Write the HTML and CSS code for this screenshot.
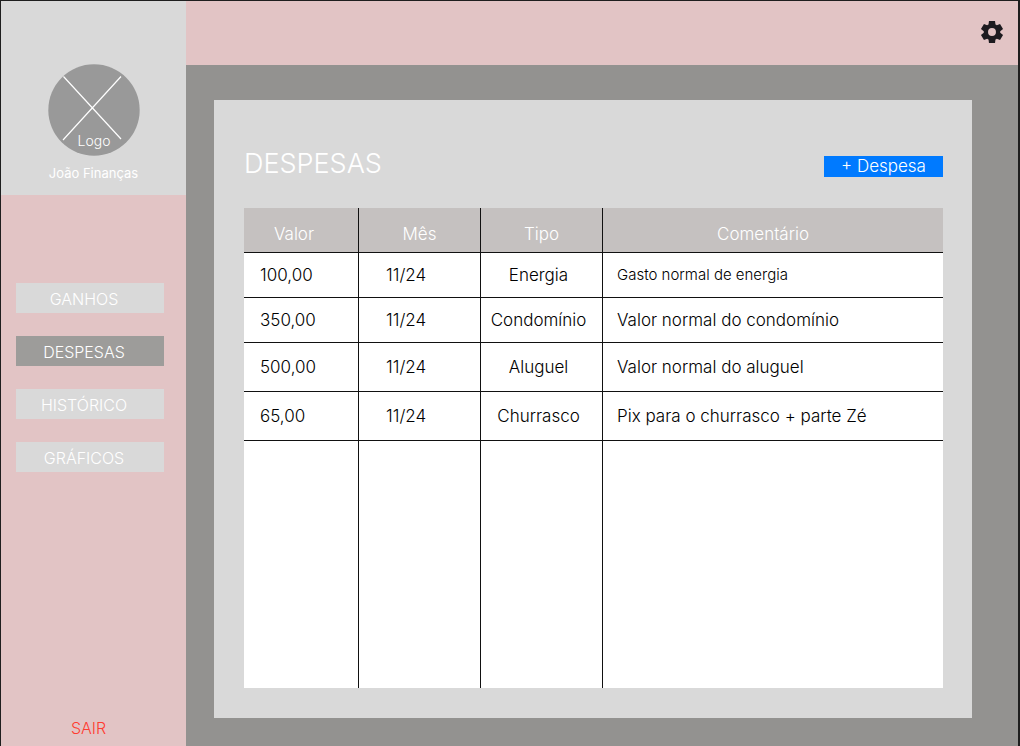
FILE: index.html
```html
<!DOCTYPE html>
<html lang="pt-BR">
<head>
<meta charset="utf-8">
<meta name="viewport" content="width=device-width, initial-scale=1">
<title>João Finanças - Despesas</title>
<link rel="stylesheet" href="styles.css">
</head>
<body>
<div class="app">
  <aside class="sidebar">
    <div class="brand">
      <svg class="logo" viewBox="0 0 92 92" role="img" aria-label="Logo">
        <circle cx="46" cy="46" r="45.7" fill="#999"/>
        <path d="M15.5 12.5 73 75M73 12.5 15 76" stroke="#fff" stroke-width="1.2" fill="none"/>
        <text class="logo-text" x="46" y="82" text-anchor="middle">Logo</text>
      </svg>
      <span class="brand-name">João Finanças</span>
    </div>
    <nav class="nav">
      <a class="nav-link" href="#ganhos">GANHOS</a>
      <a class="nav-link active" href="#despesas" aria-current="page">DESPESAS</a>
      <a class="nav-link" href="#historico">HISTÓRICO</a>
      <a class="nav-link" href="#graficos">GRÁFICOS</a>
    </nav>
    <a class="logout" href="#sair">SAIR</a>
  </aside>
  <div class="content">
    <header class="topbar">
      <button class="settings" type="button" aria-label="Configurações">
        <svg class="gear" viewBox="2 2 20 20" aria-hidden="true"><path fill="#1d1b20" fill-rule="evenodd" d="M9.25 2h5.5l.4 3.2q.65.25 1.2.67l2.95-1.25 2.75 4.75-2.57 1.95v1.36l2.57 1.95-2.75 4.75-2.95-1.25q-.55.42-1.2.67l-.4 3.2h-5.5l-.4-3.2q-.65-.25-1.2-.67L4.7 19.38l-2.75-4.75 2.57-1.95v-1.36L1.95 9.37 4.7 4.62l2.95 1.25q.55-.42 1.2-.67zM12 8.4a3.6 3.6 0 1 0 0 7.2 3.6 3.6 0 0 0 0-7.2z"/></svg>
      </button>
    </header>
    <main class="main">
      <section class="panel">
        <div class="panel-head">
          <h1 class="title">DESPESAS</h1>
          <button class="add" type="button">+ Despesa</button>
        </div>
        <table class="table">
          <colgroup><col class="col-value"><col class="col-month"><col class="col-type"><col></colgroup>
          <thead>
            <tr><th class="value">Valor</th><th>Mês</th><th>Tipo</th><th class="comment">Comentário</th></tr>
          </thead>
          <tbody>
            <tr><td class="value">100,00</td><td class="month">11/24</td><td class="type">Energia</td><td class="comment small">Gasto normal de energia</td></tr>
            <tr><td class="value">350,00</td><td class="month">11/24</td><td class="type">Condomínio</td><td class="comment">Valor normal do condomínio</td></tr>
            <tr class="tall"><td class="value">500,00</td><td class="month">11/24</td><td class="type">Aluguel</td><td class="comment">Valor normal do aluguel</td></tr>
            <tr class="tall"><td class="value">65,00</td><td class="month">11/24</td><td class="type">Churrasco</td><td class="comment">Pix para o churrasco + parte Zé</td></tr>
            <tr class="blank"><td></td><td></td><td></td><td></td></tr>
          </tbody>
        </table>
      </section>
    </main>
  </div>
</div>
</body>
</html>
```
FILE: styles.css
```css
* { box-sizing: border-box; }
body { margin: 0; font-family: Inter, "Liberation Sans", sans-serif; font-size: 16px; }
a { text-decoration: none; }
button { border: 0; padding: 0; font: inherit; cursor: pointer; }

.app {
  display: flex;
  min-height: 100vh;
  border: solid #1e1e1e;
  border-width: 1px 2px 0 1px;
  background: #939290;
}
.sidebar {
  display: flex;
  flex-direction: column;
  flex: 0 0 185px;
  background: #e2c4c5;
}
.brand {
  display: flex;
  flex-direction: column;
  align-items: center;
  padding: 63px 0 12px;
  background: #d9d9d9;
  color: #fff;
}
.logo { display: block; width: 92px; height: 92px; }
.logo-text { fill: #fff; font-size: 14px; font-weight: 300; }
.brand-name { margin-top: 7px; font-size: 13px; line-height: 20px; font-weight: 400; }
.nav {
  display: flex;
  flex-direction: column;
  gap: 23px;
  padding: 88px 22px 0 15px;
}
.nav-link {
  padding: 2px 12px 0 0;
  line-height: 28px;
  text-align: center;
  font-weight: 300;
  color: #fff;
  background: #d9d9d9;
}
.nav-link.active { background: #9d9c9a; }
.logout {
  margin: auto auto 8px;
  padding-right: 10px;
  line-height: 20px;
  font-weight: 300;
  color: #ff3b30;
}
.content { display: flex; flex-direction: column; flex: 1; min-width: 0; }
.topbar {
  display: flex;
  align-items: center;
  justify-content: flex-end;
  height: 64px;
  padding: 0 15px 2px 0;
  background: #e2c4c5;
}
.settings { display: flex; background: none; }
.gear { width: 22px; height: 22px; overflow: visible; }
.main { display: flex; flex: 1; padding: 35px 46px 28px 28px; }
.panel {
  display: flex;
  flex-direction: column;
  flex: 1;
  padding: 46px 29px 30px 30px;
  background: #d9d9d9;
}
.panel-head { display: flex; justify-content: space-between; align-items: center; margin-bottom: 26px; }
.title { margin: 0; font-size: 27px; line-height: 36px; font-weight: 300; color: #fff; }
.add {
  width: 119px;
  margin-top: 5px;
  line-height: 21px;
  font-size: 17px;
  font-weight: 300;
  color: #fff;
  background: #007aff;
}
.table {
  flex: 1;
  width: 100%;
  table-layout: fixed;
  border-spacing: 0;
  background: #fff;
  font-size: 17px;
  line-height: 20px;
}
.col-value { width: 115px; }
.col-month, .col-type { width: 122px; }
th, td { padding: 0; border: solid #111; border-width: 0 1px 1px 0; }
th:last-child, td:last-child { border-right: 0; }
th { height: 45px; padding-top: 8px; font-weight: 300; color: #fff; background: #c5c1c0; }
th.value { padding-right: 14px; }
th.comment { padding-right: 20px; }
td { height: 45px; font-weight: 300; color: #000; }
td.value { padding-left: 16px; }
td.month { padding-left: 27px; }
td.type { padding-right: 6px; text-align: center; }
td.comment { padding-left: 14px; }
td.small { font-size: 15px; }
.tall td { height: 49px; }
.blank td { height: auto; border-bottom: 0; }
```
